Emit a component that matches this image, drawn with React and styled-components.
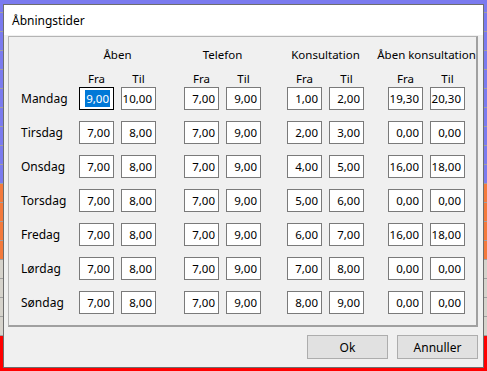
import React from 'react';
import styled, { createGlobalStyle } from 'styled-components';

const Global = createGlobalStyle`
  html, body {
    margin: 0;
    padding: 0;
    overflow: hidden;
  }
  body {
    font-family: "Noto Sans", "Open Sans", sans-serif;
    font-size: 11.5px;
    color: #000;
  }
`;

const Screen = styled.div`
  position: relative;
  width: 487px;
  height: 371px;
  overflow: hidden;
  background: #ff0000;
`;

const Stripes = styled.div`
  display: flex;
  flex-direction: column;
  margin-top: -6px;
`;

const Stripe = styled.div`
  height: 18px;
  background: ${(p) => p.$color};
  border-bottom: 1px solid #a0a0a0;
`;

const Window = styled.div`
  position: absolute;
  left: 3px;
  top: 4px;
  width: 479px;
  height: 362px;
  border: 1px solid #6e6e6e;
  background: #f0f0f0;
  display: flex;
  flex-direction: column;
`;

const TitleBar = styled.div`
  height: 30px;
  background: #fff;
  display: flex;
  align-items: center;
  padding-left: 8px;
  font-size: 12px;
`;

const Body = styled.div`
  flex: 1;
  display: flex;
  flex-direction: column;
  padding: 1px 5px 7px 4px;
`;

const GroupBox = styled.div`
  border-top: 1px solid #b4b4b4;
  border-left: 1px solid #b4b4b4;
  border-right: 2px solid #a0a0a0;
  border-bottom: 2px solid #a0a0a0;
  padding: 9px 0 11px 12px;
  display: flex;
  flex-direction: column;
`;

const Row = styled.div`
  display: flex;
  align-items: center;
  height: ${(p) => p.$h || 23}px;
  margin-top: ${(p) => p.$mt || 0}px;
`;

const DayLabel = styled.div`
  width: 58px;
  flex: none;
  font-size: 12px;
`;

const Pair = styled.div`
  display: flex;
  gap: 7px;
  margin-left: ${(p) => p.$offset}px;
  flex: none;
`;

const GroupTitle = styled.div`
  width: 77px;
  display: flex;
  justify-content: center;
  white-space: nowrap;
`;

const SubLabel = styled.div`
  width: 35px;
  text-align: center;
`;

const Field = styled.div`
  box-sizing: content-box;
  width: 30px;
  height: 21px;
  border: 1px solid ${(p) => (p.$focused ? '#000' : '#7a7a7a')};
  background: #fff;
  display: flex;
  align-items: center;
  justify-content: flex-end;
  padding-right: 3px;
`;

const Selected = styled.span`
  background: #0078d7;
  color: #fff;
  line-height: 17px;
  padding: 0 1px;
`;

const Footer = styled.div`
  display: flex;
  justify-content: flex-end;
  gap: 9px;
  margin-top: 8px;
`;

const Button = styled.div`
  width: 79px;
  height: 22px;
  border: 1px solid #adadad;
  background: #e1e1e1;
  display: flex;
  align-items: center;
  justify-content: center;
  font-size: 12px;
`;

const offsets = [0, 28, 26, 24];
const groups = ['Åben', 'Telefon', 'Konsultation', 'Åben konsultation'];

const days = [
  ['Mandag', ['9,00', '10,00'], ['7,00', '9,00'], ['1,00', '2,00'], ['19,30', '20,30']],
  ['Tirsdag', ['7,00', '8,00'], ['7,00', '9,00'], ['2,00', '3,00'], ['0,00', '0,00']],
  ['Onsdag', ['7,00', '8,00'], ['7,00', '9,00'], ['4,00', '5,00'], ['16,00', '18,00']],
  ['Torsdag', ['7,00', '8,00'], ['7,00', '9,00'], ['5,00', '6,00'], ['0,00', '0,00']],
  ['Fredag', ['7,00', '8,00'], ['7,00', '9,00'], ['6,00', '7,00'], ['16,00', '18,00']],
  ['Lørdag', ['7,00', '8,00'], ['7,00', '9,00'], ['7,00', '8,00'], ['0,00', '0,00']],
  ['Søndag', ['7,00', '8,00'], ['7,00', '9,00'], ['8,00', '9,00'], ['0,00', '0,00']],
];

const stripes = [
  ...Array(10).fill('#7b7bef'),
  ...Array(4).fill('#f47a3c'),
  ...Array(4).fill('#d6d3cc'),
];

export default function App() {
  return (
    <Screen>
      <Global />
      <Stripes>
        {stripes.map((c, i) => (
          <Stripe key={i} $color={c} />
        ))}
      </Stripes>
      <Window>
        <TitleBar>Åbningstider</TitleBar>
        <Body>
          <GroupBox>
            <Row $h={16}>
              <DayLabel />
              {groups.map((g, i) => (
                <Pair key={g} $offset={offsets[i]}>
                  <GroupTitle>{g}</GroupTitle>
                </Pair>
              ))}
            </Row>
            <Row $h={16} $mt={8}>
              <DayLabel />
              {groups.map((g, i) => (
                <Pair key={g} $offset={offsets[i]}>
                  <SubLabel>Fra</SubLabel>
                  <SubLabel>Til</SubLabel>
                </Pair>
              ))}
            </Row>
            {days.map(([day, ...pairs], r) => (
              <Row key={day} $mt={r === 0 ? 1 : 11}>
                <DayLabel>{day}</DayLabel>
                {pairs.map(([from, to], i) => (
                  <Pair key={i} $offset={offsets[i]}>
                    <Field $focused={r === 0 && i === 0}>
                      {r === 0 && i === 0 ? <Selected>{from}</Selected> : from}
                    </Field>
                    <Field>{to}</Field>
                  </Pair>
                ))}
              </Row>
            ))}
          </GroupBox>
          <Footer>
            <Button>Ok</Button>
            <Button>Annuller</Button>
          </Footer>
        </Body>
      </Window>
    </Screen>
  );
}
